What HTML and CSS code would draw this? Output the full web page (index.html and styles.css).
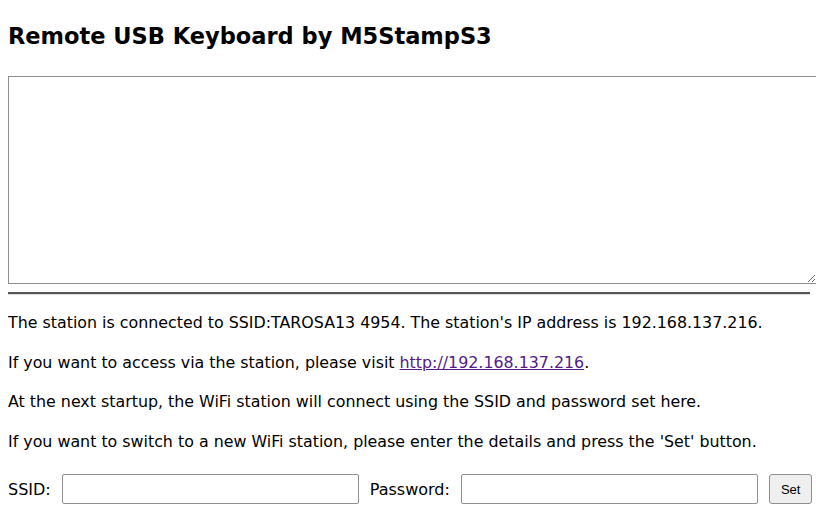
FILE: index.html
```html
<!DOCTYPE html>
<html>
<head>
<meta charset="utf-8">
<link rel="stylesheet" href="styles.css">
</head>
<body>
<h2 class="title">Remote USB Keyboard by M5StampS3</h2>
<textarea class="pad"></textarea>
<hr class="rule">
<p class="msg">The station is connected to SSID:TAROSA13 4954. The station's IP address is 192.168.137.216.</p>
<p class="msg">If you want to access via the station, please visit <a class="link" href="#">http://192.168.137.216</a>.</p>
<p class="msg">At the next startup, the WiFi station will connect using the SSID and password set here.</p>
<p class="msg">If you want to switch to a new WiFi station, please enter the details and press the 'Set' button.</p>
<form class="form">
<label class="lbl">SSID:</label>
<input class="field" type="text">
<label class="lbl">Password:</label>
<input class="field" type="password">
<button class="btn" type="button">Set</button>
</form>
</body>
</html>
```
FILE: styles.css
```css
html { margin: 0; padding: 0; overflow: hidden; }
body {
  margin: 8px 0 8px 8px;
  font-family: "DejaVu Sans", Verdana, sans-serif;
  font-size: 16px;
  color: #000;
  background: #fff;
}
.title {
  font-size: 22.5px;
  font-weight: bold;
  margin: 14px 0 26px;
  line-height: 28px;
}
.pad {
  display: block;
  width: 809px;
  height: 208px;
  box-sizing: border-box;
  border: 1px solid #8f8f8f;
  margin: 0;
  padding: 2px;
  resize: both;
}
.rule {
  margin: 8px 0 0;
  width: 802px;
  border: 0;
  border-top: 2px solid #555;
  border-bottom: 1px solid #ddd;
}
.msg {
  margin: 16px 0 0;
  line-height: 23.5px;
  font-size: 15.85px;
}
.link { color: #551a8b; }
.form {
  display: flex;
  align-items: center;
  margin-top: 21px;
}
.lbl { margin-right: 11px; font-size: 16px; }
.field {
  width: 297px;
  height: 30px;
  box-sizing: border-box;
  border: 1px solid #8f8f8f;
  border-radius: 2px;
  margin-right: 11px;
}
.btn {
  height: 30px;
  padding: 0 11px;
  font-size: 13px;
  border: 1px solid #8f8f8f;
  border-radius: 3px;
  background: #efeff0;
}
```
